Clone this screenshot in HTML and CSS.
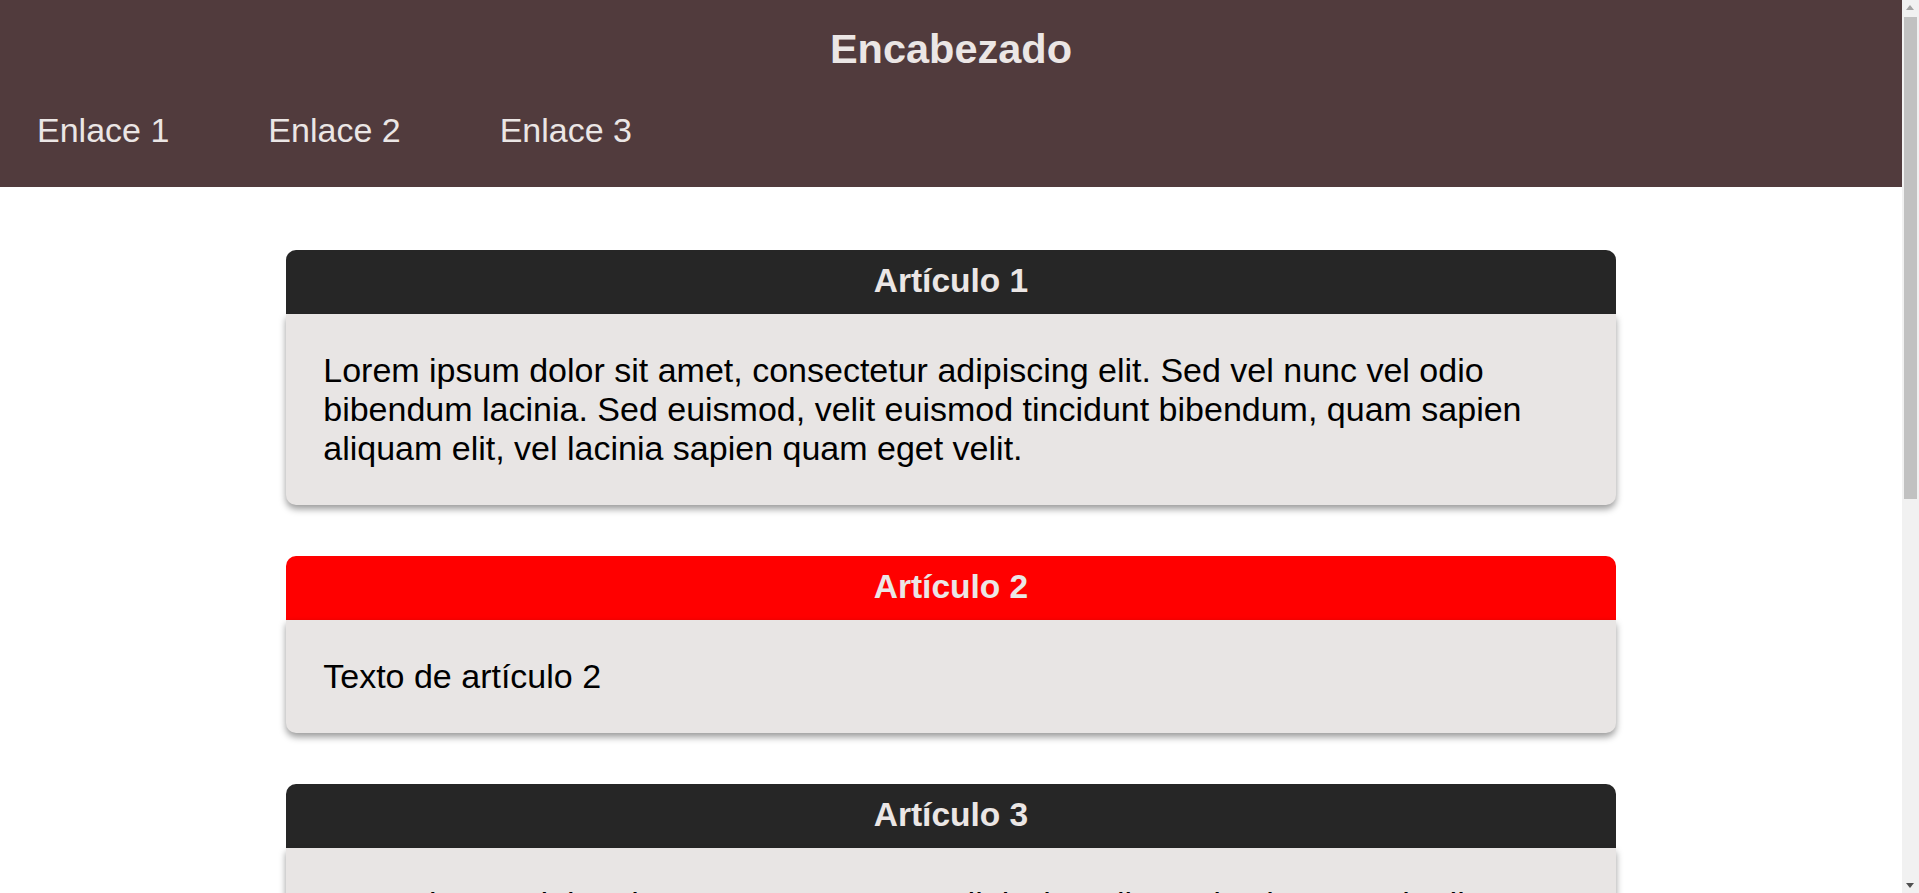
FILE: index.html
```html
<!DOCTYPE html>
<html lang="es">
<head>
<meta charset="utf-8">
<title>Encabezado</title>
<link rel="stylesheet" href="styles.css">
</head>
<body>
<div class="page">
  <header class="site-header">
    <h1 class="site-title">Encabezado</h1>
    <nav class="site-nav">
      <a class="nav-link" href="#">Enlace 1</a>
      <a class="nav-link" href="#">Enlace 2</a>
      <a class="nav-link" href="#">Enlace 3</a>
    </nav>
  </header>
  <main class="content">
    <article class="card">
      <h2 class="card-title">Artículo 1</h2>
      <div class="card-body">
        <p class="card-text">Lorem ipsum dolor sit amet, consectetur adipiscing elit. Sed vel nunc vel odio bibendum lacinia. Sed euismod, velit euismod tincidunt bibendum, quam sapien aliquam elit, vel lacinia sapien quam eget velit.</p>
      </div>
    </article>
    <article class="card card-alert">
      <h2 class="card-title">Artículo 2</h2>
      <div class="card-body">
        <p class="card-text">Texto de artículo 2</p>
      </div>
    </article>
    <article class="card">
      <h2 class="card-title">Artículo 3</h2>
      <div class="card-body">
        <p class="card-text">Lorem ipsum dolor sit amet, consectetur adipiscing elit. Sed vel nunc vel odio bibendum lacinia. Sed euismod, velit euismod tincidunt bibendum, quam sapien aliquam elit, vel lacinia sapien quam eget velit.</p>
      </div>
    </article>
  </main>
</div>
<div class="fake-scrollbar" aria-hidden="true">
  <span class="sb-arrow sb-up"></span>
  <span class="sb-thumb"></span>
  <span class="sb-arrow sb-down"></span>
</div>
</body>
</html>
```

FILE: styles.css
```css
html, body {
  margin: 0;
  padding: 0;
}

body {
  font-family: "Liberation Sans", Arial, sans-serif;
  background: #ffffff;
  color: #000000;
}

.page {
  margin-right: 17px;
}

.site-header {
  background: #513b3d;
  color: #ebe6e5;
  padding: 26px 0 38px 0;
}

.site-title {
  margin: 0;
  font-size: 41.5px;
  line-height: 46px;
  font-weight: bold;
  text-align: center;
}

.site-nav {
  display: flex;
  gap: 99px;
  padding-left: 37px;
  margin-top: 40px;
}

.nav-link {
  color: #ebe6e5;
  text-decoration: none;
  font-size: 34px;
  line-height: 37px;
}

.content {
  display: flex;
  flex-direction: column;
  align-items: center;
  gap: 51px;
  padding: 63px 0 60px 0;
}

.card {
  width: 69.9%;
}

.card-title {
  margin: 0;
  background: #262626;
  color: #ebe6e5;
  font-size: 33.5px;
  line-height: 37px;
  font-weight: bold;
  text-align: center;
  padding: 12px 0 15px 0;
  border-radius: 10px 10px 0 0;
}

.card-alert .card-title {
  background: #ff0000;
}

.card-body {
  background: #e8e5e4;
  padding: 37px 37px;
  border-radius: 0 0 10px 10px;
  box-shadow: 0 4px 7px rgba(0, 0, 0, 0.4);
}

.card-text {
  margin: 0;
  font-size: 34px;
  line-height: 39px;
}

.fake-scrollbar {
  position: fixed;
  top: 0;
  right: 0;
  width: 17px;
  height: 100vh;
  background: #f1f1f1;
}

.sb-thumb {
  position: absolute;
  top: 17px;
  left: 2px;
  width: 13px;
  height: 482px;
  background: #c1c1c1;
}

.sb-arrow {
  position: absolute;
  left: 4px;
  width: 0;
  height: 0;
  border-left: 4.5px solid transparent;
  border-right: 4.5px solid transparent;
}

.sb-up {
  top: 5px;
  border-bottom: 5px solid #a3a3a3;
}

.sb-down {
  bottom: 5px;
  border-top: 5px solid #505050;
}
```
